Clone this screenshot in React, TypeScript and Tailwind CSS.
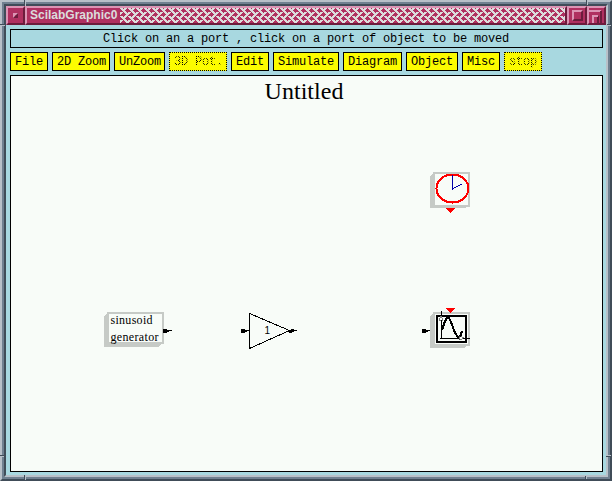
import React from "react";

const MONO = "font-['Liberation_Mono',monospace]";

type Item = { label: string; width: string; off?: boolean };

const items: Item[] = [
  { label: "File", width: "w-[38px]" },
  { label: "2D Zoom", width: "w-[58px]" },
  { label: "UnZoom", width: "w-[51px]" },
  { label: "3D Pot.", width: "w-[58px]", off: true },
  { label: "Edit", width: "w-[38px]" },
  { label: "Simulate", width: "w-[66px]" },
  { label: "Diagram", width: "w-[59px]" },
  { label: "Object", width: "w-[52px]" },
  { label: "Misc", width: "w-[38px]" },
  { label: "stop", width: "w-[38px]", off: true },
];

const bevel =
  "border-2 border-t-[#dc94b4] border-l-[#dc94b4] border-b-[#6c1c3c] border-r-[#6c1c3c] bg-[#b03060]";

function Weave() {
  return (
    <svg className="h-full w-full" shapeRendering="crispEdges">
      <defs>
        <pattern id="weave" width="8" height="8" patternUnits="userSpaceOnUse">
          <rect width="8" height="8" fill="#b03060" />
          <path
            d="M0 0h3v1H0zM1 1h3v1H1zM2 2h3v1H2zM3 3h3v1H3zM4 4h3v1H4zM5 5h3v1H5zM0 4h3v1H0zM0 5h2v1H0zM7 5h1v1H7zM0 6h1v1H0zM6 6h2v1H6zM5 7h3v1H5zM4 0h3v1H4zM4 1h2v1H4z"
            fill="#dcdcdc"
          />
        </pattern>
      </defs>
      <rect width="100%" height="100%" fill="url(#weave)" />
    </svg>
  );
}

function TitleBar() {
  return (
    <div className="flex h-[19px] shrink-0">
      <div className={`flex w-[19px] items-center justify-center ${bevel}`}>
        <div className="h-[5px] w-[5px] border-2 border-t-[#dc94b4] border-l-[#dc94b4] border-b-[#6c1c3c] border-r-[#6c1c3c]" />
      </div>
      <div className={`flex min-w-0 flex-1 ${bevel}`}>
        <div className="w-[93px] shrink-0 pl-[3px] font-['Liberation_Sans',sans-serif] text-[12px] leading-[14px] font-bold whitespace-nowrap text-[#dcdcdc]">
          <span>ScilabGraphic0</span>
        </div>
        <div className="min-w-0 flex-1">
          <Weave />
        </div>
      </div>
      <div className={`flex w-5 items-center justify-center ${bevel}`}>
        <div className={`h-[11px] w-[11px] ${bevel}`} />
      </div>
      <div className={`w-[19px] pt-[2px] ${bevel}`}>
        <svg width="15" height="13" shapeRendering="crispEdges" className="block">
          <path d="M0 0h12v2H0z" fill="#dc94b4" />
          <path d="M11 1h2v12h-2zM8 6h2v7H8z" fill="#6c1c3c" />
          <path d="M3 13V5h6v2H5v6z" fill="#dc94b4" />
        </svg>
      </div>
    </div>
  );
}

function Diagram() {
  return (
    <svg width="591" height="395" viewBox="11 76 591 395" shapeRendering="crispEdges" className="block">
      <text x="304" y="99" textAnchor="middle" fontFamily="'Liberation Serif', serif" fontSize="24" textLength="79">
        Untitled
      </text>

      <path d="M430 176l3-2h1v31h35l-4 3h-35z" fill="#c6cac6" />
      <rect x="434" y="173" width="35" height="33" fill="#f8fcf8" stroke="#c6cac6" strokeWidth="2" />
      <ellipse cx="452.5" cy="188.5" rx="16" ry="14" fill="none" stroke="#f00" strokeWidth="2" />
      <path d="M452.5 175v14l9-5" fill="none" stroke="#0000a8" />
      <path d="M445 208h10l-5 5z" fill="#f00" />

      <path d="M104 316l3-2h1v28h55l-4 5h-55z" fill="#c6cac6" />
      <rect x="108" y="313" width="55" height="30" fill="#f8fcf8" stroke="#c6cac6" strokeWidth="2" />
      <g fontFamily="'Liberation Serif', serif" fontSize="12">
        <text x="110.5" y="324" textLength="42">sinusoid</text>
        <text x="110.5" y="341" textLength="48">generator</text>
      </g>
      <path d="M163 329h4v1h5v1h-3v1h-2v1h-4z" />

      <path d="M249.5 313.5v35l40-18z" fill="none" stroke="#000" />
      <text x="264.5" y="334" fontFamily="'Liberation Sans', sans-serif" fontSize="10">1</text>
      <path d="M241 329h4v1h4v1h-2v1h-2v1h-4zM288 330h3v-1h3v1h3v1h-3v1h-2v1h-3v-1h-1z" />

      <path d="M430 316l3-2h1v29h35l-4 5h-35z" fill="#c6cac6" />
      <rect x="434" y="313" width="35" height="32" fill="#f8fcf8" stroke="#c6cac6" strokeWidth="2" />
      <rect x="437" y="316" width="29" height="26" fill="#f8fcf8" stroke="#000" strokeWidth="2" />
      <path d="M441.5 311v28M440 338.5h30" fill="none" stroke="#000" />
      <path d="M442 330l3-9 2-3h2l2 4 4 11 3 4h2l2-6" fill="none" stroke="#000" strokeWidth="2" />
      <path d="M439 320l2-5 2 5zM459 336l5 2-5 2z" fill="#f8fcf8" stroke="#000" strokeWidth=".5" />
      <path d="M445 308h10l-5 5z" fill="#f00" />
      <path d="M422 329h4v1h4v1h-2v1h-2v1h-4z" />
    </svg>
  );
}

/* Resize-handle notches cut across the window frame. */
function Notches() {
  return (
    <svg width="612" height="481" className="block" shapeRendering="crispEdges">
      <path d="M24 0h1v6h-1zM586 0h1v5h-1zM0 24h6v1H0zM0 455h4v1H0zM607 24h5v1h-5zM606 456h5v1h-5zM24 475h1v5h-1zM585 476h1v4h-1z" fill="#404c58" />
      <path d="M25 1h1v5h-1zM587 1h1v4h-1zM1 25h4v1H1zM1 456h3v1H1zM607 25h4v1h-4zM607 455h4v1h-4zM25 476h1v4h-1zM586 476h1v3h-1z" fill="#b8c0c8" />
    </svg>
  );
}

export default function App() {
  return (
    <div className="relative h-[481px] w-[612px] border-2 border-t-[#b8c0c8] border-l-[#b8c0c8] border-r-[#404c58] border-b-[#404c58]">
      <div className="h-full border-2 border-[#708090]">
        <div className="flex h-full flex-col border-2 border-t-[#404c58] border-l-[#404c58] border-r-[#b8c0c8] border-b-[#b8c0c8] bg-[#a8d8e0]">
          <TitleBar />
          <div className="flex flex-1 flex-col pt-1 pr-[3px] pl-1">
            <div className={`h-[19px] border border-black pl-[92px] text-[12px] leading-[18px] tracking-[-0.2px] whitespace-pre ${MONO}`}>
              Click on an a port , click on a port of object to be moved
            </div>
            <div className="mt-1 flex h-[19px] gap-1">
              {items.map((item) => (
                <div
                  key={item.label}
                  className={`${item.width} ${item.off ? "border-dotted" : ""} shrink-0 border border-black bg-[#fcfc00] pl-1 text-[12px] leading-[18px] tracking-[-0.2px] whitespace-pre ${MONO}`}
                >
                  <span
                    className={
                      item.off
                        ? "bg-[repeating-conic-gradient(#000_0_25%,#fcfc00_0_50%)] bg-[length:2px_2px] bg-clip-text text-transparent"
                        : "text-black"
                    }
                  >
                    {item.label}
                  </span>
                </div>
              ))}
            </div>
            <div className="mt-1 h-[397px] border border-black bg-[#f8fcf8]">
              <Diagram />
            </div>
          </div>
        </div>
      </div>
      <div className="pointer-events-none absolute -top-0.5 -left-0.5">
        <Notches />
      </div>
    </div>
  );
}
